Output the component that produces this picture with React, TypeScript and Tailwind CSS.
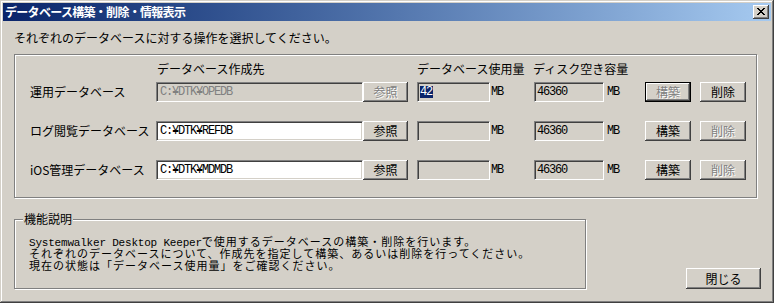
import React from "react";

const ui = "font-['Noto_Sans_CJK_JP',sans-serif] text-[12px] leading-[12px]";
const mono =
  "font-['Liberation_Mono','Noto_Sans_CJK_JP',monospace] text-[12px] leading-[12px] tracking-[-1.2px]";
const raised =
  "bg-[#d4d0c8] shadow-[inset_-1px_-1px_0_#404040,inset_1px_1px_0_#ffffff,inset_-2px_-2px_0_#808080,inset_2px_2px_0_#d4d0c8]";
const sunken =
  "border border-t-[#808080] border-l-[#808080] border-b-white border-r-white shadow-[inset_1px_1px_0_#404040,inset_-1px_-1px_0_#d4d0c8]";
const etched = "border border-[#808080] shadow-[inset_1px_1px_0_#ffffff,1px_1px_0_#ffffff]";

interface Row {
  label: string;
  path: string;
  pathDisabled: boolean;
  usage: string;
  disk: string;
  buildDisabled: boolean;
  buildDefault: boolean;
  deleteDisabled: boolean;
}

const rows: Row[] = [
  {
    label: "運用データベース",
    path: "C:¥DTK¥OPEDB",
    pathDisabled: true,
    usage: "42",
    disk: "46360",
    buildDisabled: true,
    buildDefault: true,
    deleteDisabled: false,
  },
  {
    label: "ログ閲覧データベース",
    path: "C:¥DTK¥REFDB",
    pathDisabled: false,
    usage: "",
    disk: "46360",
    buildDisabled: false,
    buildDefault: false,
    deleteDisabled: true,
  },
  {
    label: "iOS管理データベース",
    path: "C:¥DTK¥MDMDB",
    pathDisabled: false,
    usage: "",
    disk: "46360",
    buildDisabled: false,
    buildDefault: false,
    deleteDisabled: true,
  },
];

function Btn({
  label,
  disabled,
  isDefault,
  className,
}: {
  label: string;
  disabled?: boolean;
  isDefault?: boolean;
  className: string;
}) {
  return (
    <div
      className={`flex items-center justify-center ${raised} ${className} ${
        isDefault ? "border border-black" : ""
      }`}
    >
      <span
        className={`${ui} ${
          disabled ? "text-[#808080] [text-shadow:1px_1px_0_#ffffff]" : "text-black"
        }`}
      >
        {label}
      </span>
    </div>
  );
}

function CloseGlyph() {
  const pixels = [
    [0, 0], [1, 0], [6, 0], [7, 0],
    [1, 1], [2, 1], [5, 1], [6, 1],
    [2, 2], [3, 2], [4, 2], [5, 2],
    [3, 3], [4, 3],
    [2, 4], [3, 4], [4, 4], [5, 4],
    [1, 5], [2, 5], [5, 5], [6, 5],
    [0, 6], [1, 6], [6, 6], [7, 6],
  ];
  return (
    <svg width="8" height="7" viewBox="0 0 8 7" shapeRendering="crispEdges">
      {pixels.map(([x, y]) => (
        <rect key={`${x}-${y}`} x={x} y={y} width="1" height="1" fill="#000" />
      ))}
    </svg>
  );
}

export default function App() {
  return (
    <div className="flex h-[303px] w-[774px] flex-col bg-[#d4d0c8] p-[3px] shadow-[inset_-1px_-1px_0_#404040,inset_1px_1px_0_#d4d0c8,inset_-2px_-2px_0_#808080,inset_2px_2px_0_#ffffff]">
      {/* title bar */}
      <div className="flex h-[18px] items-center justify-between bg-linear-to-r from-[#0a246a] to-[#a6caf0] pl-[2px] pr-[2px]">
        <span className={`${ui} font-bold tracking-[-0.7px] text-white`}>
          データベース構築・削除・情報表示
        </span>
        <div className={`flex h-[14px] w-[16px] items-center justify-center pb-[1px] pr-[1px] ${raised}`}>
          <CloseGlyph />
        </div>
      </div>

      <div className="flex flex-col pl-[11px]">
        <div className={`mt-[11px] ${ui} text-black`}>
          それぞれのデータベースに対する操作を選択してください。
        </div>

        {/* operations group */}
        <div className={`mt-[10px] h-[144px] w-[743px] pl-[15px] pt-[8px] ${etched}`}>
          <div className={`flex h-[12px] ${ui} text-black`}>
            <div className="w-[127px]" />
            <div className="w-[260px]">データベース作成先</div>
            <div className="w-[116px]">データベース使用量</div>
            <div>ディスク空き容量</div>
          </div>

          <div className="mt-[7px] flex flex-col gap-[19px]">
            {rows.map((r) => (
              <div key={r.label} className="flex h-[20px] items-center">
                <div className={`w-[126px] ${ui} text-black`}>{r.label}</div>
                <div
                  className={`flex h-[20px] w-[207px] items-center pl-[3px] ${sunken} ${
                    r.pathDisabled ? "bg-[#d4d0c8] text-[#808080]" : "bg-white text-black"
                  }`}
                >
                  <span className={mono}>{r.path}</span>
                </div>
                <Btn label="参照" disabled={r.pathDisabled} className="h-[20px] w-[45px]" />
                <div className={`ml-[9px] flex h-[20px] w-[73px] items-center bg-[#d4d0c8] pl-[2px] ${sunken}`}>
                  {r.usage && (
                    <span className={`${mono} bg-[#0a246a] pr-[1px] text-white`}>{r.usage}</span>
                  )}
                </div>
                <div className={`w-[44px] pl-[1px] ${mono} text-black`}>MB</div>
                <div className={`flex h-[20px] w-[70px] items-center bg-[#d4d0c8] pl-[2px] ${sunken}`}>
                  <span className={`${mono} text-black`}>{r.disk}</span>
                </div>
                <div className={`w-[41px] pl-[3px] ${mono} text-black`}>MB</div>
                <Btn
                  label="構築"
                  disabled={r.buildDisabled}
                  isDefault={r.buildDefault}
                  className="h-[20px] w-[46px]"
                />
                <Btn label="削除" disabled={r.deleteDisabled} className="ml-[9px] h-[20px] w-[46px]" />
              </div>
            ))}
          </div>
        </div>

        <div className="mt-[21px] flex items-end">
          {/* description group */}
          <div className={`relative h-[70px] w-[572px] pl-[14px] pt-[17px] ${etched}`}>
            <span className={`absolute -top-[7px] left-[8px] bg-[#d4d0c8] px-[1px] ${ui} text-black`}>
              機能説明
            </span>
            <div className="font-['Liberation_Mono','Noto_Sans_CJK_JP',monospace] text-[11px] leading-[12px] tracking-[1px] text-black">
              <div>
                <span className="tracking-[-0.2px]">Systemwalker Desktop Keeper</span>
                で使用するデータベースの構築・削除を行います。
              </div>
              <div>それぞれのデータベースについて、作成先を指定して構築、あるいは削除を行ってください。</div>
              <div>現在の状態は「データベース使用量」をご確認ください。</div>
            </div>
          </div>
          <Btn label="閉じる" className="ml-[100px] h-[21px] w-[75px]" />
        </div>
      </div>
    </div>
  );
}
